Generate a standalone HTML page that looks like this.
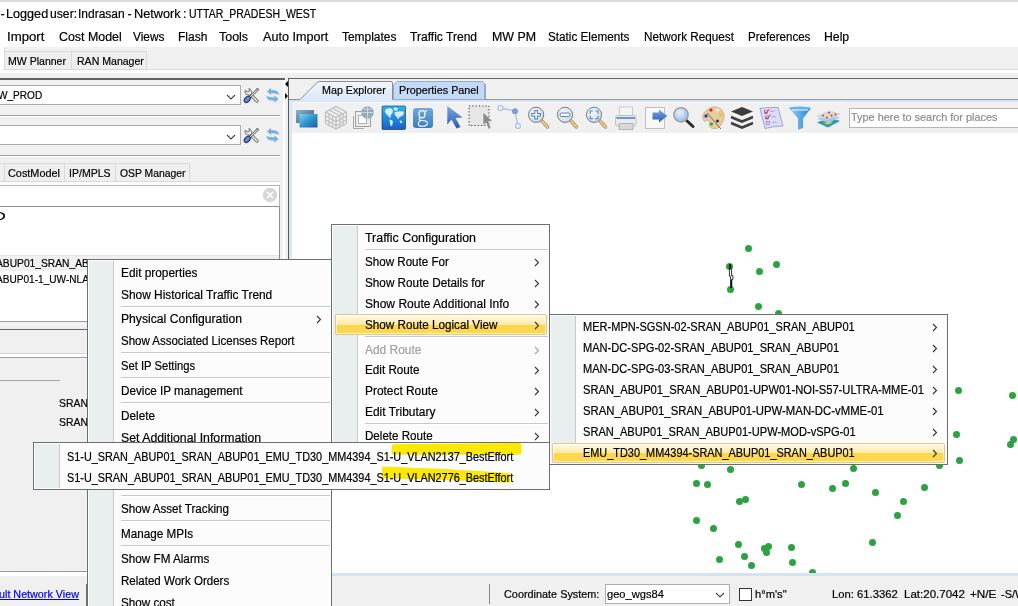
<!DOCTYPE html>
<html><head><meta charset="utf-8">
<style>
*{margin:0;padding:0;box-sizing:border-box}
html,body{width:1018px;height:606px;overflow:hidden;background:#f0f0f0;position:relative;font-family:"Liberation Sans",sans-serif;color:#000}
.a{position:absolute}
.t{position:absolute;white-space:nowrap;line-height:14px;transform-origin:0 0;filter:grayscale(1);-webkit-text-stroke:0.2px currentColor}
.dot{position:absolute;width:7px;height:7px;border-radius:50%;background:#2ca343}
.sep{position:absolute;height:2px;border-top:1px solid #c8c8c8;border-bottom:1px solid #fff}
.arr{position:absolute;width:5px;height:8px}
</style></head><body>
<div class="a" style="left:0px;top:0px;width:1018px;height:2px;background:#dcdcdc;"></div>
<div class="a" style="left:0px;top:2px;width:1018px;height:45px;background:#fff;"></div>
<div class="a" style="left:0px;top:47px;width:5px;height:23px;background:#fff;border-right:1px solid #d9d9d9"></div>
<div class="a" style="left:4px;top:51px;width:68px;height:19px;background:#efefef;border:1px solid #d9d9d9"></div>
<div class="a" style="left:71px;top:51px;width:76px;height:19px;background:#efefef;border:1px solid #d9d9d9;border-left:1px solid #d9d9d9"></div>
<div class="a" style="left:147px;top:69px;width:871px;height:1px;background:#dadada;"></div>
<div class="a" style="left:0px;top:70px;width:1018px;height:3px;background:#fff;"></div>
<div class="a" style="left:0px;top:78px;width:285px;height:2px;background:#626262;"></div>
<div class="a" style="left:283px;top:80px;width:2px;height:526px;background:#fff;"></div>
<div class="a" style="left:288px;top:78px;width:1px;height:528px;background:#5a5a5a;"></div>
<div class="a" style="left:289px;top:99px;width:3px;height:507px;background:#d9e6f8;"></div>
<svg class="a" style="left:284px;top:80px" width="5" height="20" viewBox="0 0 5 20"><path d="M4 1 L1 4 L4 7Z M1 13 L4 16 L1 19Z" fill="#000"/></svg>
<div class="a" style="left:-2px;top:85px;width:243px;height:20px;background:#fff;border:1px solid #adadad"></div>
<svg class="a" style="left:226px;top:94px" width="10" height="6" viewBox="0 0 10 6"><path d="M1 1 L5 5 L9 1" fill="none" stroke="#444" stroke-width="1.1"/></svg>
<div class="a" style="left:-2px;top:125px;width:243px;height:20px;background:#fff;border:1px solid #adadad"></div>
<svg class="a" style="left:226px;top:134px" width="10" height="6" viewBox="0 0 10 6"><path d="M1 1 L5 5 L9 1" fill="none" stroke="#444" stroke-width="1.1"/></svg>
<svg class="a" style="left:240px;top:84px" width="44" height="24" viewBox="0 0 44 24">
<path d="M10.5 10.5 L17 17" stroke="#6e6e6e" stroke-width="3.2" stroke-linecap="round"/>
<path d="M10.5 10.5 L17 17" stroke="#fafafa" stroke-width="1.3" stroke-linecap="round"/>
<path d="M5 7.5 Q4.5 10.5 8 11 Q10.5 11.5 11.5 9.5 Q12.5 7.5 10 5 L9 4.5 L9.5 7.5 L7 8.2 L5.5 6Z" fill="#fafafa" stroke="#6e6e6e" stroke-width="1"/>
<path d="M17.5 5.5 L9.5 13.5" stroke="#6e6e6e" stroke-width="2.6" stroke-linecap="round"/>
<path d="M17.5 5.5 L9.5 13.5" stroke="#fafafa" stroke-width="1" stroke-linecap="round"/>
<path d="M16.8 4 L18.8 6 L18 7 L16 5Z" fill="#888"/>
<ellipse cx="7.3" cy="15.4" rx="2.3" ry="3.6" transform="rotate(45 7.3 15.4)" fill="#7c8cb0" stroke="#1b3a8a" stroke-width="1.2"/>
<path d="M39 11 Q39 7 34 6.2 L31 6 L31 3.8 L27 7.5 L31 11.2 L31 9.2 L34 9.4 Q37 9.8 39 11Z" fill="#79b0e2"/>
<path d="M26.5 12 Q26.5 16 31.5 16.5 L34.5 16.8 L34.5 18.8 L38.5 15 L34.5 11.2 L34.5 13.3 L31.5 13.2 Q28.5 13 26.5 12Z" fill="#79b0e2"/>
</svg>
<svg class="a" style="left:240px;top:124px" width="44" height="24" viewBox="0 0 44 24">
<path d="M10.5 10.5 L17 17" stroke="#6e6e6e" stroke-width="3.2" stroke-linecap="round"/>
<path d="M10.5 10.5 L17 17" stroke="#fafafa" stroke-width="1.3" stroke-linecap="round"/>
<path d="M5 7.5 Q4.5 10.5 8 11 Q10.5 11.5 11.5 9.5 Q12.5 7.5 10 5 L9 4.5 L9.5 7.5 L7 8.2 L5.5 6Z" fill="#fafafa" stroke="#6e6e6e" stroke-width="1"/>
<path d="M17.5 5.5 L9.5 13.5" stroke="#6e6e6e" stroke-width="2.6" stroke-linecap="round"/>
<path d="M17.5 5.5 L9.5 13.5" stroke="#fafafa" stroke-width="1" stroke-linecap="round"/>
<path d="M16.8 4 L18.8 6 L18 7 L16 5Z" fill="#888"/>
<ellipse cx="7.3" cy="15.4" rx="2.3" ry="3.6" transform="rotate(45 7.3 15.4)" fill="#7c8cb0" stroke="#1b3a8a" stroke-width="1.2"/>
<path d="M39 11 Q39 7 34 6.2 L31 6 L31 3.8 L27 7.5 L31 11.2 L31 9.2 L34 9.4 Q37 9.8 39 11Z" fill="#79b0e2"/>
<path d="M26.5 12 Q26.5 16 31.5 16.5 L34.5 16.8 L34.5 18.8 L38.5 15 L34.5 11.2 L34.5 13.3 L31.5 13.2 Q28.5 13 26.5 12Z" fill="#79b0e2"/>
</svg>
<div class="a" style="left:0px;top:115px;width:281px;height:1px;background:#a0a0a0;"></div>
<div class="a" style="left:0px;top:116px;width:281px;height:1px;background:#fff;"></div>
<div class="a" style="left:0px;top:155px;width:281px;height:1px;background:#a0a0a0;"></div>
<div class="a" style="left:0px;top:156px;width:281px;height:1px;background:#fff;"></div>
<div class="a" style="left:-2px;top:163px;width:7px;height:19px;background:#efefef;border:1px solid #d9d9d9"></div>
<div class="a" style="left:4px;top:163px;width:61px;height:19px;background:#efefef;border:1px solid #d9d9d9"></div>
<div class="a" style="left:64px;top:163px;width:52px;height:19px;background:#efefef;border:1px solid #d9d9d9"></div>
<div class="a" style="left:115px;top:163px;width:75px;height:19px;background:#efefef;border:1px solid #d9d9d9"></div>
<div class="a" style="left:0px;top:181px;width:281px;height:4px;background:#fff;border-top:1px solid #d9d9d9;border-right:1px solid #d9d9d9"></div>
<div class="a" style="left:-2px;top:185px;width:282px;height:22px;background:#fff;border:1px solid #b4b4b4;border-bottom:1px solid #8c9099"></div>
<svg class="a" style="left:262px;top:187px" width="16" height="16" viewBox="0 0 16 16"><circle cx="8" cy="8" r="7.2" fill="#d6d6d6"/><path d="M5 5 L11 11 M11 5 L5 11" stroke="#fff" stroke-width="1.6"/></svg>
<div class="a" style="left:-2px;top:207px;width:282px;height:115px;background:#fff;border-right:1px solid #8c8c8c;border-bottom:1px solid #9aa0a8"></div>
<div class="a" style="left:0px;top:255px;width:279px;height:16px;background:#f0f0f0;border-top:1px solid #e3e3e3"></div>
<div class="a" style="left:0px;top:322px;width:280px;height:7px;background:#efefef;"></div>
<div class="a" style="left:0px;top:324px;width:280px;height:1px;background:#fafafa;"></div>
<div class="a" style="left:0px;top:329px;width:281px;height:1px;background:#666;"></div>
<div class="a" style="left:0px;top:353px;width:281px;height:1px;background:#d8d8d8;"></div>
<div class="a" style="left:0px;top:354px;width:281px;height:3px;background:#fff;"></div>
<div class="a" style="left:0px;top:357px;width:281px;height:1px;background:#9aa0aa;"></div>
<div class="a" style="left:0px;top:380px;width:60px;height:1px;background:#a6a6a6;"></div>
<div class="a" style="left:280px;top:80px;width:3px;height:526px;background:#f0f0f0;"></div>
<div class="a" style="left:0px;top:571px;width:87px;height:1px;background:#9a9a9a;"></div>
<div class="a" style="left:0px;top:572px;width:87px;height:4px;background:#fff;"></div>
<div class="a" style="left:86px;top:584px;width:1px;height:22px;background:#6e6e6e;"></div>
<div class="a" style="left:289px;top:78px;width:729px;height:1px;background:#666;"></div>
<div class="a" style="left:292px;top:79px;width:726px;height:20px;background:#f0f0f0;"></div>
<div class="a" style="left:289px;top:100px;width:729px;height:2px;background:#d5e3f7;"></div>
<div class="a" style="left:489px;top:99px;width:529px;height:1px;background:#999;"></div>
<svg class="a" style="left:289px;top:79px" width="200" height="24" viewBox="0 0 200 24">
<defs><linearGradient id="g1" x1="0" y1="0" x2="0" y2="1"><stop offset="0" stop-color="#f3f7fd"/><stop offset="1" stop-color="#d6e5f8"/></linearGradient></defs>
<path d="M11 23 L11 20 L28.5 3 Q29.5 2.5 31 2.5 L102 2.5 Q103.5 2.5 103.5 4 L103.5 20 L103.5 23Z" fill="url(#g1)"/>
<path d="M0 20.5 L11 20.5 L28.5 3 Q29.5 2.5 31 2.5 L102 2.5 Q103.5 2.5 103.5 4 L103.5 20.5 L200 20.5" fill="none" stroke="#8c8c8c" stroke-width="1"/>
<path d="M104.5 20.5 L104.5 6 L108 2.5 L193.5 2.5 L195.5 4.5 L195.5 20.5Z" fill="#c2daf7" stroke="#9aabc0" stroke-width="1"/>
<path d="M196.5 5 L196.5 20" stroke="#a8a8a8" stroke-width="1"/>
</svg>
<div class="a" style="left:292px;top:102px;width:726px;height:31px;background:#f0f0f0;"></div>
<div class="a" style="left:292px;top:102px;width:552px;height:1px;background:#fbfbfb;"></div>
<div class="a" style="left:292px;top:133px;width:726px;height:440px;background:#fff;"></div>
<div class="a" style="left:289px;top:573px;width:729px;height:3px;background:#d5e3f7;"></div>
<div class="a" style="left:849px;top:108px;width:175px;height:20px;background:#fff;border:1px solid #b5b5b5"></div>
<div class="a" style="left:489px;top:584px;width:1px;height:20px;background:#8a8a8a;"></div>
<div class="a" style="left:605px;top:584px;width:125px;height:20px;background:#fff;border:1px solid #adadad"></div>
<svg class="a" style="left:715px;top:592px" width="10" height="6" viewBox="0 0 10 6"><path d="M1 1 L5 5 L9 1" fill="none" stroke="#444" stroke-width="1.1"/></svg>
<div class="a" style="left:739px;top:588px;width:13px;height:13px;background:#fff;border:1px solid #333"></div>
<svg class="a" style="left:0;top:0" width="1018" height="140" viewBox="0 0 1018 140">
<defs>
<linearGradient id="w1" x1="0" y1="0" x2="1" y2="1"><stop offset="0" stop-color="#8fb3cc"/><stop offset="1" stop-color="#2f5878"/></linearGradient>
<linearGradient id="w2" x1="0" y1="0" x2="1" y2="1"><stop offset="0" stop-color="#7fd6f5"/><stop offset="0.5" stop-color="#2f94cf"/><stop offset="1" stop-color="#1c5f9a"/></linearGradient>
<linearGradient id="wm" x1="0" y1="0" x2="0" y2="1"><stop offset="0" stop-color="#2fb4f0"/><stop offset="1" stop-color="#1560c8"/></linearGradient>
<linearGradient id="gg" x1="0" y1="0" x2="0" y2="1"><stop offset="0" stop-color="#74a9dc"/><stop offset="1" stop-color="#3a7cc2"/></linearGradient>
<linearGradient id="ar" x1="0" y1="0" x2="0" y2="1"><stop offset="0" stop-color="#7aa6e0"/><stop offset="1" stop-color="#2b5bb0"/></linearGradient>
<radialGradient id="lens" cx="0.4" cy="0.35" r="0.7"><stop offset="0" stop-color="#f4f8fc"/><stop offset="1" stop-color="#c9d8ea"/></radialGradient>
<radialGradient id="lens2" cx="0.4" cy="0.35" r="0.7"><stop offset="0" stop-color="#e8f2fc"/><stop offset="1" stop-color="#8fb4e2"/></radialGradient>
<linearGradient id="fn" x1="0" y1="0" x2="1" y2="0"><stop offset="0" stop-color="#9fd0f4"/><stop offset="0.6" stop-color="#4ea3e2"/><stop offset="1" stop-color="#2f7fd0"/></linearGradient>
</defs>
<!-- windows -->
<rect x="296" y="110" width="18" height="13" fill="url(#w1)"/>
<rect x="299.5" y="114" width="18" height="13.5" fill="url(#w2)"/>
<!-- wire cube -->
<g fill="none" stroke="#bdbdbd" stroke-width="1.2">
<path d="M325.5 112 L336 106.5 L346.5 112 L346.5 123.5 L336 129 L325.5 123.5Z"/>
<path d="M325.5 112 L336 117.5 L346.5 112 M336 117.5 L336 129"/>
<path d="M329 110 L339.5 115.5 M332.5 108.3 L343 114 M325.5 116 L336 121.5 L346.5 116 M325.5 120 L336 125.5 L346.5 120 M329 114 L329 125.5 M332.5 115.7 L332.5 127 M340 115.7 L340 127 M343 114 L343 125.5"/>
</g>
<!-- squares + globe -->
<path d="M353.5 116 L353.5 128.5 L364 128.5" fill="none" stroke="#a8a8a8" stroke-width="1"/>
<rect x="355.5" y="111.5" width="15" height="15" fill="#ececec" stroke="#a0a0a0" stroke-width="1"/>
<rect x="358.5" y="115.5" width="8" height="8" fill="#fff" stroke="#b0b0b0" stroke-width="1"/>
<circle cx="367.5" cy="112.5" r="6.3" fill="#96aabb"/>
<path d="M361.3 112.5 L373.7 112.5 M367.5 106.2 L367.5 118.8 M363 108.5 Q367.5 111 372 108.5" stroke="#d8e0e6" stroke-width="0.8" fill="none"/>
<!-- world map -->
<rect x="382" y="106" width="23.5" height="23.5" rx="1" fill="url(#wm)" stroke="#1a2a40" stroke-width="0.6"/>
<path d="M385 110 Q388 107.5 391.5 108.5 Q393.5 110 392.5 113 L390.5 115.5 Q391.5 117 390 118 L388.5 116.5 Q386 114 385 112Z M393.5 107.8 Q396 107 398 108.5 L396.5 111 L394.5 110.5Z M394.5 112.5 Q399 110.5 403.5 111.5 Q404.5 114 402 116 L399.5 117 L398 119.5 L396.5 116.5 Q394 115 394.5 112.5Z M389.5 119.5 Q392.5 119.5 393 122 L392 126 Q390.5 126.5 390 124Z M399.5 120.5 Q402 120 402.5 122 L400.5 123.5Z" fill="#e6f3fb" opacity="0.92"/>
<!-- google g -->
<rect x="413" y="108" width="20" height="20" rx="3" fill="url(#gg)"/>
<ellipse cx="422" cy="114.3" rx="3" ry="3.6" fill="none" stroke="#fff" stroke-width="1.2"/><path d="M424.3 111.8 Q425.5 110.6 427.2 110.8" fill="none" stroke="#fff" stroke-width="1.1"/><path d="M420 117.8 Q418 119.5 420.5 120.3 L424.5 120.8 Q428 121.5 427.3 124 Q426 126.5 422 126.3 Q418 126 418.3 123.5 Q418.6 121.8 420.5 120.5" fill="none" stroke="#fff" stroke-width="1.1"/>
<!-- blue arrow -->
<path d="M447.3 106 L462.6 117.4 L455.5 118 L460.5 127 L456.5 128.5 L451.5 119.5 L447.3 124.8Z" fill="url(#ar)"/>
<!-- dotted rect + cursor -->
<rect x="469" y="106" width="20" height="19.5" fill="#e4e4e4" opacity="0.8"/>
<rect x="469" y="106" width="20" height="19.5" fill="none" stroke="#333" stroke-width="1" stroke-dasharray="1.2 2.1"/>
<path d="M483 112.3 L492.5 121 L488.5 121.5 L491 128 L488.5 129.3 L486 122.8 L483 125.5Z" fill="#8a8a8a" stroke="#f4f4f4" stroke-width="0.6"/>
<!-- polyline -->
<path d="M500 108 L515 111 L518 126" fill="none" stroke="#a9c4e8" stroke-width="1.3"/>
<circle cx="500.5" cy="108" r="2.4" fill="#fff" stroke="#a4c0ea" stroke-width="1.3"/>
<circle cx="515" cy="111.2" r="2.5" fill="#7f9ee6" stroke="#6a8ee0" stroke-width="1"/>
<circle cx="518" cy="126" r="2.4" fill="#fff" stroke="#a4c0ea" stroke-width="1.3"/>
<!-- zoom in/out/fit -->
<g stroke-linecap="round">
<path d="M542 121 L547.5 127" stroke="#b88f4a" stroke-width="3.4"/><path d="M542 121 L547.5 127" stroke="#ecd29c" stroke-width="1.8"/>
<path d="M571 121 L576.5 127" stroke="#b88f4a" stroke-width="3.4"/><path d="M571 121 L576.5 127" stroke="#ecd29c" stroke-width="1.8"/>
<path d="M600 121 L605.5 127" stroke="#b88f4a" stroke-width="3.4"/><path d="M600 121 L605.5 127" stroke="#ecd29c" stroke-width="1.8"/>
</g>
<circle cx="536.1" cy="114.8" r="7.6" fill="url(#lens)" stroke="#7c7c7c" stroke-width="1"/>
<circle cx="565" cy="114.8" r="7.6" fill="url(#lens)" stroke="#7c7c7c" stroke-width="1"/>
<circle cx="594" cy="114.8" r="7.6" fill="url(#lens)" stroke="#7c7c7c" stroke-width="1"/>
<path d="M536.1 110 L536.1 119.6 M531.3 114.8 L540.9 114.8" stroke="#4d7cc4" stroke-width="3.6"/>
<path d="M536.1 111 L536.1 118.6 M532.3 114.8 L539.9 114.8" stroke="#fff" stroke-width="1.6"/>
<rect x="560" y="113" width="10" height="3.6" rx="1.8" fill="#fff" stroke="#4d7cc4" stroke-width="1"/>
<path d="M590.2 113.8 L590.2 111 L593 111 M595.2 111 L598 111 L598 113.8 M598 115.8 L598 118.6 L595.2 118.6 M593 118.6 L590.2 118.6 L590.2 115.8" fill="none" stroke="#5a8ed0" stroke-width="1.2"/>
<!-- printer -->
<rect x="619.5" y="107" width="13" height="9" fill="#f4f4f4" stroke="#c4c4c4" stroke-width="0.8"/>
<rect x="615.5" y="115.5" width="20.5" height="10.5" rx="2" fill="#ebebeb" stroke="#b8b8b8" stroke-width="0.8"/>
<rect x="616.5" y="117" width="18.5" height="2" fill="#6b98d0"/>
<rect x="619" y="123.5" width="14" height="6" fill="#d8d8d8" stroke="#a8a8a8" stroke-width="0.8"/>
<!-- export -->
<rect x="645.5" y="107.5" width="19" height="21" fill="#f8f8f8" stroke="#b4b4b4" stroke-width="0.8"/>
<path d="M652.5 112.5 L659 112.5 L659 109.5 L667.3 116 L659 122.5 L659 119.5 L652.5 119.5Z" fill="url(#ar)"/>
<!-- magnifier -->
<path d="M686.5 120.5 L693 126.5" stroke="#2a2a2a" stroke-width="3" stroke-linecap="round"/>
<circle cx="681" cy="114.8" r="7.2" fill="url(#lens2)" stroke="#9a9a9a" stroke-width="1.3"/>
<!-- palette -->
<path d="M712 107 Q722 106 724 114 Q725 122 718 128 Q712 130 709 126 Q711 121 707 120 Q704 123 703 119 Q701 112 712 107Z" fill="#e6cc9c" stroke="#c4a878" stroke-width="0.7"/>
<circle cx="711" cy="110" r="1.6" fill="#d02020"/><circle cx="717.5" cy="110" r="1.6" fill="#f0f0f0"/>
<circle cx="720.5" cy="115" r="1.6" fill="#e8c020"/><circle cx="706" cy="116" r="1.7" fill="#2040c0"/>
<circle cx="717.5" cy="121" r="1.6" fill="#303850"/><circle cx="711.5" cy="124" r="1.6" fill="#30a030"/>
<path d="M707 113 L721 129" stroke="#8a6a50" stroke-width="1"/>
<!-- layers -->
<path d="M742 107 L753 111.5 L742 116 L731 111.5Z" fill="#3c3c3c"/>
<path d="M731 117 L742 121.5 L753 117 L753 118.5 L742 123 L731 118.5Z" fill="#3c3c3c"/>
<path d="M731 123 L742 127.5 L753 123 L753 124.5 L742 129 L731 124.5Z" fill="#3c3c3c"/>
<path d="M731 116.5 L742 121 L753 116.5" fill="none" stroke="#3c3c3c" stroke-width="1.8"/>
<path d="M731 122.5 L742 127 L753 122.5" fill="none" stroke="#3c3c3c" stroke-width="1.8"/>
<!-- checklist -->
<path d="M760 108.5 Q770 107 778 107.5 L783 126 Q774 126 765 128.5Z" fill="#dcdcf8" stroke="#9090d0" stroke-width="0.8"/>
<rect x="764.5" y="110.5" width="3" height="3" fill="none" stroke="#7070a0" stroke-width="0.6"/>
<rect x="765.5" y="116" width="3" height="3" fill="none" stroke="#7070a0" stroke-width="0.6"/>
<rect x="766.5" y="121.5" width="3" height="3" fill="none" stroke="#7070a0" stroke-width="0.6"/>
<path d="M764.5 111.5 L766 113.5 L769.5 109 M765.5 117 L767 119 L770.5 114.5" fill="none" stroke="#e02020" stroke-width="1"/>
<path d="M770 111.5 L775 111 M771 117 L776 116.5 M772 122.5 L777 122" stroke="#9a9ad0" stroke-width="0.8"/>
<!-- funnel -->
<path d="M789 108 L811 108 L803 118.5 L803 128 L798 129.7 L798 118.5Z" fill="url(#fn)"/>
<ellipse cx="800" cy="108.3" rx="11" ry="1.8" fill="#62b4ee"/>
<path d="M792 110 L808 110" stroke="#fff" stroke-width="0.9"/>
<!-- map layers -->
<path d="M817 122.5 L829.5 117.5 L840 121 L828 127.5Z" fill="#2f8fd8"/>
<path d="M820 122 L829 118.5 L836 121 L827 125Z" fill="#3cae3c"/>
<path d="M824 123.5 L830 121 L833 122.5 L828 124.5Z" fill="#d8d040"/>
<path d="M817 119 L829.5 114 L840 117.5 L828 123Z" fill="#9fd0f2" opacity="0.92"/>
<path d="M817 116 L829.5 111 L840 114 L828 119.5Z" fill="#d9d9d9" stroke="#c4c4c4" stroke-width="0.5"/>
<circle cx="823" cy="115.5" r="1" fill="#e03434"/><circle cx="829" cy="112.8" r="1" fill="#e03434"/><circle cx="831.5" cy="115.5" r="1" fill="#e03434"/><circle cx="827" cy="117.5" r="1" fill="#e03434"/><circle cx="835.5" cy="114.5" r="1" fill="#e03434"/>
<!-- tool + refresh icons left panel -->
</svg>
<div class="a" style="left:292px;top:133px;width:726px;height:440px;overflow:hidden">
<div class="dot" style="left:452.9px;top:112.4px"></div>
<div class="dot" style="left:433.6px;top:130.1px"></div>
<div class="dot" style="left:463.9px;top:135.2px"></div>
<div class="dot" style="left:480.8px;top:128.3px"></div>
<div class="dot" style="left:434.8px;top:153.2px"></div>
<div class="dot" style="left:462.7px;top:169.9px"></div>
<div class="dot" style="left:482.7px;top:176.8px"></div>
<div class="dot" style="left:663.1px;top:254.2px"></div>
<div class="dot" style="left:717.0px;top:259.1px"></div>
<div class="dot" style="left:660.7px;top:298.2px"></div>
<div class="dot" style="left:717.5px;top:302.7px"></div>
<div class="dot" style="left:714.5px;top:308.2px"></div>
<div class="dot" style="left:663.7px;top:324.1px"></div>
<div class="dot" style="left:644.3px;top:328.8px"></div>
<div class="dot" style="left:405.8px;top:328.8px"></div>
<div class="dot" style="left:434.6px;top:333.2px"></div>
<div class="dot" style="left:557.5px;top:331.8px"></div>
<div class="dot" style="left:400.8px;top:347.1px"></div>
<div class="dot" style="left:411.7px;top:348.0px"></div>
<div class="dot" style="left:506.0px;top:348.0px"></div>
<div class="dot" style="left:536.9px;top:351.8px"></div>
<div class="dot" style="left:549.6px;top:347.1px"></div>
<div class="dot" style="left:579.7px;top:355.9px"></div>
<div class="dot" style="left:628.9px;top:350.9px"></div>
<div class="dot" style="left:443.5px;top:365.1px"></div>
<div class="dot" style="left:450.0px;top:362.7px"></div>
<div class="dot" style="left:607.6px;top:364.8px"></div>
<div class="dot" style="left:601.8px;top:378.9px"></div>
<div class="dot" style="left:400.8px;top:383.9px"></div>
<div class="dot" style="left:418.4px;top:392.2px"></div>
<div class="dot" style="left:442.6px;top:407.8px"></div>
<div class="dot" style="left:576.7px;top:406.0px"></div>
<div class="dot" style="left:496.2px;top:411.3px"></div>
<div class="dot" style="left:469.1px;top:412.2px"></div>
<div class="dot" style="left:472.7px;top:409.9px"></div>
<div class="dot" style="left:471.2px;top:415.8px"></div>
<div class="dot" style="left:423.5px;top:423.1px"></div>
<div class="dot" style="left:449.1px;top:420.2px"></div>
<div class="dot" style="left:455.9px;top:429.0px"></div>
<div class="dot" style="left:497.1px;top:426.1px"></div>
<div class="dot" style="left:516.9px;top:435.5px"></div>
</div>
<svg class="a" style="left:726px;top:262px" width="10" height="30" viewBox="726 262 10 30"><path d="M729.4 264.5 L730.8 264.5 L730.8 269.5 L731.6 269.5 L731.6 275.6 L732.9 275.6 L732.9 279.4 L731.8 279.4 L731.8 287.5 L730.6 287.5 L730.6 279.4 L730.6 276.2 L729.4 276.2Z" fill="#fff" stroke="#000" stroke-width="0.8"/><path d="M729.6 264.5 L730.8 264.5 L730.8 269 L729.6 269Z M730.6 279.6 L731.8 279.6 L731.8 287.5 L730.6 287.5Z" fill="#000"/></svg>
<div class="a" style="left:87px;top:259px;width:245px;height:360px;background:#fcfcfc;border:1px solid #6e6e6e;z-index:10"></div>
<div class="a" style="left:89px;top:261px;width:25px;height:356px;background:#e9eeee;border-right:1px solid #c9c9c9;z-index:10"></div>
<div class="sep" style="left:121px;top:306px;width:209px;z-index:10"></div>
<div class="sep" style="left:121px;top:352px;width:209px;z-index:10"></div>
<div class="sep" style="left:121px;top:377px;width:209px;z-index:10"></div>
<div class="sep" style="left:121px;top:402px;width:209px;z-index:10"></div>
<div class="sep" style="left:121px;top:495px;width:209px;z-index:10"></div>
<div class="sep" style="left:121px;top:520px;width:209px;z-index:10"></div>
<div class="sep" style="left:121px;top:545px;width:209px;z-index:10"></div>
<svg class="a" style="left:316px;top:315px;z-index:10" width="6" height="9" viewBox="0 0 6 9"><path d="M1 1 L4.5 4.5 L1 8" fill="none" stroke="#333" stroke-width="1.1"/></svg>
<div class="a" style="left:331px;top:224px;width:219px;height:230px;background:#fcfcfc;border:1px solid #6e6e6e;z-index:20"></div>
<div class="a" style="left:333px;top:226px;width:25px;height:226px;background:#e9eeee;border-right:1px solid #c9c9c9;z-index:20"></div>
<div class="sep" style="left:365px;top:249px;width:183px;z-index:20"></div>
<div class="sep" style="left:365px;top:336px;width:183px;z-index:20"></div>
<div class="sep" style="left:365px;top:423px;width:183px;z-index:20"></div>
<div class="a" style="left:335px;top:314px;width:212px;height:21px;border:1px solid #e3c985;border-radius:2px;z-index:20;
background:linear-gradient(#fffae8 0%,#fde9a6 50%,#fdd64a 52%,#fdd84f 100%);box-shadow:inset 0 0 0 1px rgba(255,255,255,.6)"></div>
<svg class="a" style="left:534px;top:258px;z-index:20" width="6" height="9" viewBox="0 0 6 9"><path d="M1 1 L4.5 4.5 L1 8" fill="none" stroke="#333" stroke-width="1.1"/></svg>
<svg class="a" style="left:534px;top:279px;z-index:20" width="6" height="9" viewBox="0 0 6 9"><path d="M1 1 L4.5 4.5 L1 8" fill="none" stroke="#333" stroke-width="1.1"/></svg>
<svg class="a" style="left:534px;top:300px;z-index:20" width="6" height="9" viewBox="0 0 6 9"><path d="M1 1 L4.5 4.5 L1 8" fill="none" stroke="#333" stroke-width="1.1"/></svg>
<svg class="a" style="left:534px;top:321px;z-index:20" width="6" height="9" viewBox="0 0 6 9"><path d="M1 1 L4.5 4.5 L1 8" fill="none" stroke="#333" stroke-width="1.1"/></svg>
<svg class="a" style="left:534px;top:346px;z-index:20" width="6" height="9" viewBox="0 0 6 9"><path d="M1 1 L4.5 4.5 L1 8" fill="none" stroke="#a0a0a0" stroke-width="1.1"/></svg>
<svg class="a" style="left:534px;top:366px;z-index:20" width="6" height="9" viewBox="0 0 6 9"><path d="M1 1 L4.5 4.5 L1 8" fill="none" stroke="#333" stroke-width="1.1"/></svg>
<svg class="a" style="left:534px;top:387px;z-index:20" width="6" height="9" viewBox="0 0 6 9"><path d="M1 1 L4.5 4.5 L1 8" fill="none" stroke="#333" stroke-width="1.1"/></svg>
<svg class="a" style="left:534px;top:408px;z-index:20" width="6" height="9" viewBox="0 0 6 9"><path d="M1 1 L4.5 4.5 L1 8" fill="none" stroke="#333" stroke-width="1.1"/></svg>
<svg class="a" style="left:534px;top:432px;z-index:20" width="6" height="9" viewBox="0 0 6 9"><path d="M1 1 L4.5 4.5 L1 8" fill="none" stroke="#333" stroke-width="1.1"/></svg>
<div class="a" style="left:549px;top:314px;width:399px;height:151px;background:#fcfcfc;border:1px solid #6e6e6e;z-index:30"></div>
<div class="a" style="left:551px;top:316px;width:25px;height:147px;background:#e9eeee;border-right:1px solid #c9c9c9;z-index:30"></div>
<div class="a" style="left:552px;top:443px;width:393px;height:20px;border:1px solid #e3c985;border-radius:2px;z-index:30;
background:linear-gradient(#fffae8 0%,#fde9a6 50%,#fdd64a 52%,#fdd84f 100%);box-shadow:inset 0 0 0 1px rgba(255,255,255,.6)"></div>
<svg class="a" style="left:931.5px;top:323px;z-index:30" width="6" height="9" viewBox="0 0 6 9"><path d="M1 1 L4.5 4.5 L1 8" fill="none" stroke="#333" stroke-width="1.1"/></svg>
<svg class="a" style="left:931.5px;top:344px;z-index:30" width="6" height="9" viewBox="0 0 6 9"><path d="M1 1 L4.5 4.5 L1 8" fill="none" stroke="#333" stroke-width="1.1"/></svg>
<svg class="a" style="left:931.5px;top:365px;z-index:30" width="6" height="9" viewBox="0 0 6 9"><path d="M1 1 L4.5 4.5 L1 8" fill="none" stroke="#333" stroke-width="1.1"/></svg>
<svg class="a" style="left:931.5px;top:386px;z-index:30" width="6" height="9" viewBox="0 0 6 9"><path d="M1 1 L4.5 4.5 L1 8" fill="none" stroke="#333" stroke-width="1.1"/></svg>
<svg class="a" style="left:931.5px;top:407px;z-index:30" width="6" height="9" viewBox="0 0 6 9"><path d="M1 1 L4.5 4.5 L1 8" fill="none" stroke="#333" stroke-width="1.1"/></svg>
<svg class="a" style="left:931.5px;top:428px;z-index:30" width="6" height="9" viewBox="0 0 6 9"><path d="M1 1 L4.5 4.5 L1 8" fill="none" stroke="#333" stroke-width="1.1"/></svg>
<svg class="a" style="left:931.5px;top:449px;z-index:30" width="6" height="9" viewBox="0 0 6 9"><path d="M1 1 L4.5 4.5 L1 8" fill="none" stroke="#333" stroke-width="1.1"/></svg>
<div class="a" style="left:33px;top:442px;width:517px;height:48px;background:#fcfcfc;border:1px solid #6e6e6e;z-index:40"></div>
<div class="a" style="left:35px;top:444px;width:25px;height:44px;background:#e9eeee;border-right:1px solid #c9c9c9;z-index:40"></div>
<svg class="a" style="left:380px;top:443px;z-index:40" width="145" height="42" viewBox="0 0 145 42"><path d="M12 2.5 Q12 1.2 14 1.2 C60 1 100 0.5 139 0 Q141.5 0 141.5 2 L141.3 10 Q141 12 138 11.8 C100 11.5 60 11.8 14 11.8 Q11.7 11.8 11.7 10Z" fill="#fde800"/><path d="M2 25.5 Q2 23.6 4 23.8 C50 25 90 27.5 128 30 Q130.5 30.2 130.5 32 L130.5 38.5 Q130.5 40 128 39.8 C90 38 50 36.5 4 35.3 Q2 35.2 2 33.5Z" fill="#fde800"/></svg>
<div class="t" style="left:0.50px;top:7px;font-size:12.5px;transform:scaleX(1.0000);;z-index:1">-</div>
<div class="t" style="left:6.39px;top:7px;font-size:12.5px;transform:scaleX(1.0108);;z-index:1">Logged</div>
<div class="t" style="left:50.40px;top:7px;font-size:12.5px;transform:scaleX(0.9738);;z-index:1">user:</div>
<div class="t" style="left:77.84px;top:7px;font-size:12.5px;transform:scaleX(0.9603);;z-index:1">Indrasan</div>
<div class="t" style="left:127.50px;top:7px;font-size:12.5px;transform:scaleX(1.0000);;z-index:1">-</div>
<div class="t" style="left:133.58px;top:7px;font-size:12.5px;transform:scaleX(1.0177);;z-index:1">Network</div>
<div class="t" style="left:183.00px;top:7px;font-size:12.5px;transform:scaleX(1.0000);;z-index:1">:</div>
<div class="t" style="left:188.70px;top:7px;font-size:12.5px;transform:scaleX(0.8420);;z-index:1">UTTAR_PRADESH_WEST</div>
<div class="t" style="left:6.90px;top:30px;font-size:12px;transform:scaleX(1.0988);;z-index:1">Import</div>
<div class="t" style="left:58.50px;top:30px;font-size:12px;transform:scaleX(1.0329);;z-index:1">Cost Model</div>
<div class="t" style="left:133.00px;top:30px;font-size:12px;transform:scaleX(0.9908);;z-index:1">Views</div>
<div class="t" style="left:177.80px;top:30px;font-size:12px;transform:scaleX(1.0045);;z-index:1">Flash</div>
<div class="t" style="left:219.20px;top:30px;font-size:12px;transform:scaleX(1.0388);;z-index:1">Tools</div>
<div class="t" style="left:262.70px;top:30px;font-size:12px;transform:scaleX(1.0511);;z-index:1">Auto Import</div>
<div class="t" style="left:341.90px;top:30px;font-size:12px;transform:scaleX(0.9947);;z-index:1">Templates</div>
<div class="t" style="left:410.40px;top:30px;font-size:12px;transform:scaleX(1.0055);;z-index:1">Traffic Trend</div>
<div class="t" style="left:491.70px;top:30px;font-size:12px;transform:scaleX(1.0314);;z-index:1">MW PM</div>
<div class="t" style="left:548.40px;top:30px;font-size:12px;transform:scaleX(0.9752);;z-index:1">Static Elements</div>
<div class="t" style="left:643.70px;top:30px;font-size:12px;transform:scaleX(0.9773);;z-index:1">Network Request</div>
<div class="t" style="left:748.00px;top:30px;font-size:12px;transform:scaleX(0.9645);;z-index:1">Preferences</div>
<div class="t" style="left:823.50px;top:30px;font-size:12px;transform:scaleX(1.0198);;z-index:1">Help</div>
<div class="t" style="left:8.40px;top:54px;font-size:11px;transform:scaleX(0.9580);;z-index:1">MW Planner</div>
<div class="t" style="left:76.50px;top:54px;font-size:11px;transform:scaleX(0.9596);;z-index:1">RAN Manager</div>
<div class="t" style="left:-2.00px;top:88px;font-size:11px;transform:scaleX(0.9144);;z-index:1">W_PROD</div>
<div class="t" style="left:8.40px;top:166px;font-size:11px;transform:scaleX(0.9878);;z-index:1">CostModel</div>
<div class="t" style="left:68.74px;top:166px;font-size:11px;transform:scaleX(0.9580);;z-index:1">IP/MPLS</div>
<div class="t" style="left:119.80px;top:166px;font-size:11px;transform:scaleX(0.9409);;z-index:1">OSP Manager</div>
<div class="t" style="left:-7.00px;top:209px;font-size:11px;transform:scaleX(1.6125);;z-index:1">D</div>
<div class="t" style="left:-4.00px;top:256px;font-size:11px;transform:scaleX(0.9313);;z-index:1">ABUP01_SRAN_AB</div>
<div class="t" style="left:-4.00px;top:272px;font-size:11px;transform:scaleX(0.9172);;z-index:1">ABUP01-1_UW-NLA</div>
<div class="t" style="left:58.50px;top:396px;font-size:11px;transform:scaleX(0.9472);;z-index:1">SRAN</div>
<div class="t" style="left:58.50px;top:415px;font-size:11px;transform:scaleX(0.9472);;z-index:1">SRAN</div>
<div class="t" style="left:-1.00px;top:587px;font-size:11px;transform:scaleX(0.9783);color:#0000ee;text-decoration:underline;filter:none;z-index:1">ult Network View</div>
<div class="t" style="left:121.00px;top:266px;font-size:12px;transform:scaleX(0.9874);;z-index:11">Edit properties</div>
<div class="t" style="left:121.00px;top:288px;font-size:12px;transform:scaleX(0.9917);;z-index:11">Show Historical Traffic Trend</div>
<div class="t" style="left:121.00px;top:312px;font-size:12px;transform:scaleX(1.0133);;z-index:11">Physical Configuration</div>
<div class="t" style="left:121.00px;top:334px;font-size:12px;transform:scaleX(0.9564);;z-index:11">Show Associated Licenses Report</div>
<div class="t" style="left:121.00px;top:359px;font-size:12px;transform:scaleX(0.9360);;z-index:11">Set IP Settings</div>
<div class="t" style="left:121.00px;top:384px;font-size:12px;transform:scaleX(0.9753);;z-index:11">Device IP management</div>
<div class="t" style="left:121.00px;top:409px;font-size:12px;transform:scaleX(0.9796);;z-index:11">Delete</div>
<div class="t" style="left:121.00px;top:431px;font-size:12px;transform:scaleX(1.0253);;z-index:11">Set Additional Information</div>
<div class="t" style="left:121.00px;top:502px;font-size:12px;transform:scaleX(0.9696);;z-index:11">Show Asset Tracking</div>
<div class="t" style="left:121.00px;top:527px;font-size:12px;transform:scaleX(0.9739);;z-index:11">Manage MPIs</div>
<div class="t" style="left:121.00px;top:552px;font-size:12px;transform:scaleX(0.9743);;z-index:11">Show FM Alarms</div>
<div class="t" style="left:121.00px;top:574px;font-size:12px;transform:scaleX(0.9619);;z-index:11">Related Work Orders</div>
<div class="t" style="left:121.00px;top:596px;font-size:12px;transform:scaleX(0.9710);;z-index:11">Show cost</div>
<div class="t" style="left:365.00px;top:231px;font-size:12px;transform:scaleX(1.0336);;z-index:21">Traffic Configuration</div>
<div class="t" style="left:365.00px;top:255px;font-size:12px;transform:scaleX(0.9676);;z-index:21">Show Route For</div>
<div class="t" style="left:365.00px;top:276px;font-size:12px;transform:scaleX(0.9778);;z-index:21">Show Route Details for</div>
<div class="t" style="left:365.00px;top:297px;font-size:12px;transform:scaleX(1.0008);;z-index:21">Show Route Additional Info</div>
<div class="t" style="left:365.00px;top:318px;font-size:12px;transform:scaleX(0.9751);;z-index:21">Show Route Logical View</div>
<div class="t" style="left:365.00px;top:343px;font-size:12px;transform:scaleX(0.9959);color:#a0a0a0;z-index:21">Add Route</div>
<div class="t" style="left:365.00px;top:363px;font-size:12px;transform:scaleX(0.9741);;z-index:21">Edit Route</div>
<div class="t" style="left:365.00px;top:384px;font-size:12px;transform:scaleX(0.9919);;z-index:21">Protect Route</div>
<div class="t" style="left:365.00px;top:405px;font-size:12px;transform:scaleX(0.9956);;z-index:21">Edit Tributary</div>
<div class="t" style="left:365.00px;top:429px;font-size:12px;transform:scaleX(0.9663);;z-index:21">Delete Route</div>
<div class="t" style="left:582.50px;top:320px;font-size:12px;transform:scaleX(0.9197);;z-index:31">MER-MPN-SGSN-02-SRAN_ABUP01_SRAN_ABUP01</div>
<div class="t" style="left:582.50px;top:341px;font-size:12px;transform:scaleX(0.9231);;z-index:31">MAN-DC-SPG-02-SRAN_ABUP01_SRAN_ABUP01</div>
<div class="t" style="left:582.50px;top:362px;font-size:12px;transform:scaleX(0.9231);;z-index:31">MAN-DC-SPG-03-SRAN_ABUP01_SRAN_ABUP01</div>
<div class="t" style="left:582.50px;top:383px;font-size:12px;transform:scaleX(0.9303);;z-index:31">SRAN_ABUP01_SRAN_ABUP01-UPW01-NOI-S57-ULTRA-MME-01</div>
<div class="t" style="left:582.50px;top:404px;font-size:12px;transform:scaleX(0.9457);;z-index:31">SRAN_ABUP01_SRAN_ABUP01-UPW-MAN-DC-vMME-01</div>
<div class="t" style="left:582.50px;top:425px;font-size:12px;transform:scaleX(0.9234);;z-index:31">SRAN_ABUP01_SRAN_ABUP01-UPW-MOD-vSPG-01</div>
<div class="t" style="left:582.50px;top:446px;font-size:12px;transform:scaleX(0.9093);;z-index:31">EMU_TD30_MM4394-SRAN_ABUP01_SRAN_ABUP01</div>
<div class="t" style="left:67.00px;top:450px;font-size:12px;transform:scaleX(0.9044);;z-index:41">S1-U_SRAN_ABUP01_SRAN_ABUP01_EMU_TD30_MM4394_S1-U_VLAN2137_BestEffort</div>
<div class="t" style="left:67.00px;top:471px;font-size:12px;transform:scaleX(0.9044);;z-index:41">S1-U_SRAN_ABUP01_SRAN_ABUP01_EMU_TD30_MM4394_S1-U_VLAN2776_BestEffort</div>
<div class="t" style="left:504.00px;top:587px;font-size:11px;transform:scaleX(0.9871);;z-index:1">Coordinate System:</div>
<div class="t" style="left:606.50px;top:587px;font-size:11px;transform:scaleX(1.0098);;z-index:1">geo_wgs84</div>
<div class="t" style="left:754.60px;top:587px;font-size:11px;transform:scaleX(1.0134);;z-index:1">h°m's"</div>
<div class="t" style="left:831.70px;top:587px;font-size:11px;transform:scaleX(1.0232);;z-index:1">Lon: 61.3362</div>
<div class="t" style="left:904.20px;top:587px;font-size:11px;transform:scaleX(1.0484);;z-index:1">Lat:20.7042</div>
<div class="t" style="left:970.10px;top:587px;font-size:11px;transform:scaleX(1.0686);;z-index:1">+N/E</div>
<div class="t" style="left:1001.00px;top:587px;font-size:11px;transform:scaleX(1.0000);;z-index:1">-S/W</div>
<div class="t" style="left:321.80px;top:83px;font-size:11px;transform:scaleX(0.9749);;z-index:1">Map Explorer</div>
<div class="t" style="left:398.50px;top:83px;font-size:11px;transform:scaleX(0.9805);;z-index:1">Properties Panel</div>
<div class="t" style="left:851.00px;top:110px;font-size:11px;transform:scaleX(0.9901);color:#8c8c8c;z-index:1">Type here to search for places</div>
</body></html>
